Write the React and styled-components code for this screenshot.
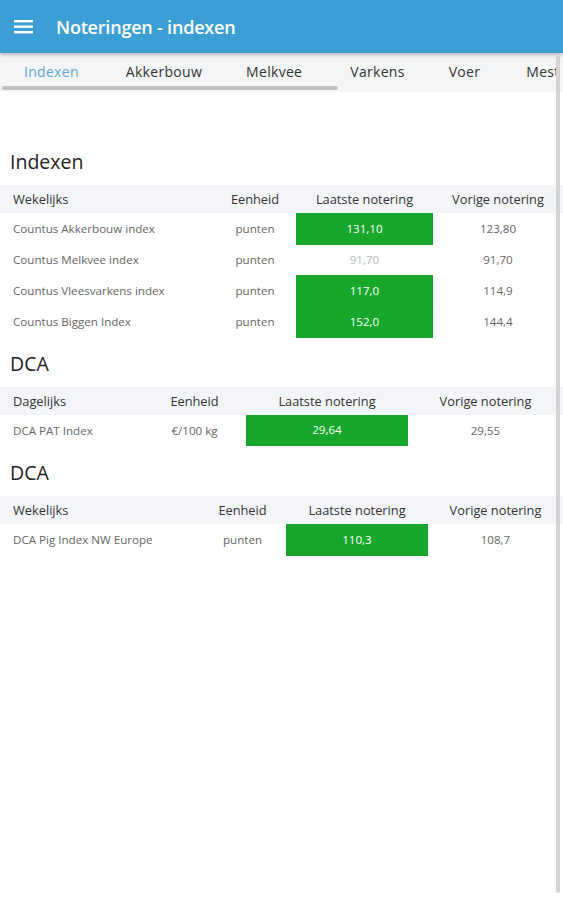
import React from 'react';
import styled, { createGlobalStyle } from 'styled-components';

const GlobalStyle = createGlobalStyle`
  html, body {
    margin: 0;
    padding: 0;
    background: #ffffff;
    font-family: "Open Sans", "Noto Sans", sans-serif;
  }
  * { box-sizing: border-box; }
`;

const Page = styled.div`
  position: relative;
  width: 563px;
  height: 900px;
  overflow: hidden;
  background: #fff;
`;

const AppBar = styled.header`
  height: 53px;
  background: #3b9fd6;
  display: flex;
  align-items: center;
  padding-left: 14px;
  gap: 22px;
  box-shadow: 0 2px 4px rgba(0, 0, 0, 0.25);
  position: relative;
  z-index: 2;
`;

const Title = styled.h1`
  margin: 0;
  color: #fff;
  font-size: 18px;
  font-weight: 600;
  letter-spacing: -0.2px;
`;

const TabBar = styled.nav`
  height: 39px;
  background: #f4f5f7;
  display: flex;
  align-items: center;
  white-space: nowrap;
  position: relative;
  padding-bottom: 2px;
`;

const Tab = styled.div`
  flex: none;
  font-size: 14px;
  letter-spacing: 0.3px;
  color: ${({ $active }) => ($active ? '#5ba6d9' : '#333')};
  margin-left: ${({ $gap }) => $gap}px;
`;

const TabScroll = styled.div`
  position: absolute;
  left: 2px;
  bottom: 2px;
  width: 336px;
  height: 4px;
  border-radius: 2px;
  background: #c0c0c0;
`;

const VScroll = styled.div`
  position: absolute;
  right: 3px;
  top: 55px;
  width: 4px;
  height: 838px;
  background: #d4d4d4;
  border-radius: 2px;
  z-index: 3;
`;

const Content = styled.main`
  padding-top: 44px;
`;

const Heading = styled.h2`
  margin: 0;
  padding: ${({ $h }) => $h - 40}px 0 0 10px;
  font-size: 19.5px;
  font-weight: 400;
  color: #222;
  height: ${({ $h }) => $h}px;
  line-height: 34px;
`;

const Table = styled.table`
  width: 563px;
  border-collapse: collapse;
  table-layout: fixed;
`;

const HeadRow = styled.tr`
  background: #f3f5f8;
  height: 28px;
`;

const Th = styled.th`
  font-weight: 400;
  font-size: 12.8px;
  color: #333;
  padding: 0;
  text-align: ${({ $left }) => ($left ? 'left' : 'center')};
  padding-left: ${({ $left }) => ($left ? '13px' : '0')};
  white-space: nowrap;
`;

const Row = styled.tr`
  height: 31px;
`;

const Td = styled.td`
  font-size: 11.6px;
  color: #666;
  padding: 0;
  text-align: ${({ $left }) => ($left ? 'left' : 'center')};
  padding-left: ${({ $left }) => ($left ? '13px' : '0')};
  white-space: nowrap;
`;

const ValueCell = styled.td`
  padding: 0;
  font-size: 11.6px;
  font-weight: 500;
  text-align: center;
  color: ${({ $up }) => ($up ? '#fff' : '#bbb')};
  background: ${({ $up }) => ($up ? '#17a72b' : 'transparent')};
  border-bottom: 1px solid ${({ $up }) => ($up ? '#1a9e2c' : 'transparent')};
`;

const Hamburger = () => (
  <svg width="20" height="14" viewBox="0 0 20 14">
    <rect x="0" y="0" width="19" height="2.4" fill="#fff" />
    <rect x="0" y="5.5" width="19" height="2.4" fill="#fff" />
    <rect x="0" y="11" width="19" height="2.4" fill="#fff" />
  </svg>
);

const tabs = [
  { label: 'Indexen', gap: 24, active: true },
  { label: 'Akkerbouw', gap: 47 },
  { label: 'Melkvee', gap: 44 },
  { label: 'Varkens', gap: 48 },
  { label: 'Voer', gap: 44 },
  { label: 'Mest', gap: 46 },
];

const sections = [
  {
    title: 'Indexen',
    h: 49,
    period: 'Wekelijks',
    cols: [214, 82, 137, 130],
    rows: [
      ['Countus Akkerbouw index', 'punten', '131,10', '123,80', true],
      ['Countus Melkvee index', 'punten', '91,70', '91,70', false],
      ['Countus Vleesvarkens index', 'punten', '117,0', '114,9', true],
      ['Countus Biggen Index', 'punten', '152,0', '144,4', true],
    ],
  },
  {
    title: 'DCA',
    h: 49,
    period: 'Dagelijks',
    cols: [143, 103, 162, 155],
    rows: [['DCA PAT Index', '€/100 kg', '29,64', '29,55', true]],
  },
  {
    title: 'DCA',
    h: 50,
    period: 'Wekelijks',
    cols: [199, 87, 142, 135],
    rows: [['DCA Pig Index NW Europe', 'punten', '110,3', '108,7', true]],
  },
];

const App = () => {
  return (
    <Page>
      <GlobalStyle />
      <AppBar>
        <Hamburger />
        <Title>Noteringen - indexen</Title>
      </AppBar>
      <TabBar>
        {tabs.map((t) => (
          <Tab key={t.label} $active={t.active} $gap={t.gap}>{t.label}</Tab>
        ))}
        <TabScroll />
      </TabBar>
      <VScroll />
      <Content>
        {sections.map((s, i) => (
          <section key={i}>
            <Heading $h={s.h}>{s.title}</Heading>
            <Table>
              <colgroup>
                {s.cols.map((w, j) => (
                  <col key={j} style={{ width: w }} />
                ))}
              </colgroup>
              <thead>
                <HeadRow>
                  <Th $left>{s.period}</Th>
                  <Th>Eenheid</Th>
                  <Th>Laatste notering</Th>
                  <Th>Vorige notering</Th>
                </HeadRow>
              </thead>
              <tbody>
                {s.rows.map((r) => (
                  <Row key={r[0]}>
                    <Td $left>{r[0]}</Td>
                    <Td>{r[1]}</Td>
                    <ValueCell $up={r[4]}>{r[2]}</ValueCell>
                    <Td>{r[3]}</Td>
                  </Row>
                ))}
              </tbody>
            </Table>
          </section>
        ))}
      </Content>
    </Page>
  );
};

export default App;
